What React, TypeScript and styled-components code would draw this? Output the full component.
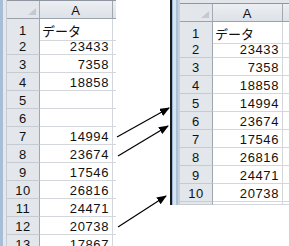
import { createGlobalStyle, styled } from "styled-components"

type SheetProps = {
    rows: (string | number)[],
    colA: number,
    spare: number,
    height: number,
    edge: "plain" | "window",
    tail?: number,
}

const leftRows = ['データ', 23433, 7358, 18858, '', '', 14994, 23674, 17546, 26816, 24471, 20738, 17867]
const rightRows = ['データ', 23433, 7358, 18858, 14994, 23674, 17546, 26816, 24471, 20738]

// arrows from the left list to the right list
const arrows = [
    { x1: 117, y1: 137, x2: 169, y2: 108 },
    { x1: 118, y1: 156, x2: 168, y2: 126 },
    { x1: 118, y1: 227, x2: 166, y2: 196 },
]

const Sheet = (props: SheetProps) => {
    const cols = `33px ${props.colA}px ${props.spare}px`
    return (
        <Frame $h={props.height}>
            <Edge $kind={props.edge} />
            <Grid $w={33 + props.colA + props.spare}>
                <TopBar />
                <Row $cols={cols} $h={18}>
                    <Corner><Triangle /></Corner>
                    <HeadCell>A</HeadCell>
                    <HeadSpare />
                </Row>
                {props.rows.map((v, i) => (
                    <Row key={i} $cols={cols} $h={18}>
                        <RowHead>{i + 1}</RowHead>
                        <Cell $text={typeof v === "string"}>{v}</Cell>
                        <Spare />
                    </Row>
                ))}
                {props.tail ? (
                    <Row $cols={cols} $h={props.tail}>
                        <RowHead />
                        <Cell $text={false} />
                        <Spare />
                    </Row>
                ) : null}
            </Grid>
        </Frame>
    )
}

export default function App() {
    return (<>
        <GlobalStyle />
        <Canvas>
            <Sheet rows={leftRows} colA={73} spare={3} height={246} edge="plain" />
            <Gap />
            <Sheet rows={rightRows} colA={70} spare={6} height={205} edge="window" tail={3} />
            <Arrows width="289" height="246">
                <defs>
                    <marker id="head" markerUnits="userSpaceOnUse" markerWidth="10" markerHeight="8"
                        refX="9" refY="4" orient="auto">
                        <path d="M0 0 L10 4 L0 8 Z" fill="#000" />
                    </marker>
                </defs>
                {arrows.map((a, i) => (
                    <line key={i} x1={a.x1} y1={a.y1} x2={a.x2} y2={a.y2}
                        stroke="#000" strokeWidth="1.2" markerEnd="url(#head)" />
                ))}
            </Arrows>
        </Canvas>
    </>)
}

const GlobalStyle = createGlobalStyle`
  body {
    margin: 0;
    background: #fff;
  }
`

const Canvas = styled.div`
    position: relative;
    width: 289px;
    height: 246px;
    overflow: hidden;
    display: flex;
    align-items: flex-start;
    background: #fff;
    font-family: "Liberation Sans", "Noto Sans CJK JP", sans-serif;
    font-size: 13px;
    letter-spacing: 0.6px;
    color: #111;
`

const Gap = styled.div`
    width: 54px;
    height: 10px;
    flex: none;
`

const Frame = styled.div<{ $h: number }>`
    display: flex;
    align-items: stretch;
    height: ${p => p.$h}px;
    overflow: hidden;
    flex: none;
`

const Edge = styled.div<{ $kind: "plain" | "window" }>`
    flex: none;
    width: ${p => p.$kind === "window" ? 10 : 7}px;
    background: ${p => p.$kind === "window"
        ? "linear-gradient(to right, #1b1b1b 0 2px, #9db6d4 2px 3px, #d6e3f2 3px 6px, #a9c0dc 6px 8px, #c9cfd6 8px 10px)"
        : "linear-gradient(to right, #a7bdd8 0 3px, #e4e8ee 3px 6px, #c6ccd3 6px 7px)"};
`

const Grid = styled.div<{ $w: number }>`
    display: flex;
    flex-direction: column;
    width: ${p => p.$w}px;
    flex: none;
`

const TopBar = styled.div`
    height: 3px;
    background: #e2e6eb;
    border-bottom: 1px solid #8f969f;
`

const Row = styled.div<{ $cols: string, $h: number }>`
    display: grid;
    grid-template-columns: ${p => p.$cols};
    height: ${p => p.$h}px;
    flex: none;
`

const Corner = styled.div`
    display: flex;
    justify-content: flex-end;
    align-items: flex-end;
    padding: 0 3px 3px 0;
    background: #e3e7ec;
    border-right: 1px solid #a4abb4;
    border-bottom: 1px solid #9aa2ac;
`

const Triangle = styled.div`
    width: 8px;
    height: 7px;
    background: #c3c9d1;
    clip-path: polygon(100% 0, 100% 100%, 0 100%);
`

const HeadCell = styled.div`
    display: flex;
    align-items: center;
    justify-content: center;
    padding-top: 1px;
    background: linear-gradient(#eceff3, #dde2e8);
    border-right: 1px solid #a0a7b0;
    border-bottom: 1px solid #9aa2ac;
`

const HeadSpare = styled.div`
    background: linear-gradient(#eceff3, #dde2e8);
    border-bottom: 1px solid #9aa2ac;
`

const RowHead = styled.div`
    display: flex;
    align-items: center;
    justify-content: center;
    padding-top: 2px;
    background: #e3e7ec;
    border-right: 1px solid #a0a7b0;
    border-bottom: 1px solid #c5cbd2;
`

const Cell = styled.div<{ $text: boolean }>`
    display: flex;
    align-items: center;
    justify-content: ${p => p.$text ? "flex-start" : "flex-end"};
    padding: 2px 3px 0 2px;
    white-space: nowrap;
    border-right: 1px solid #d3d7dc;
    border-bottom: 1px solid #d3d7dc;
    letter-spacing: ${p => p.$text ? "0" : "0.6px"};
`

const Spare = styled.div`
    border-bottom: 1px solid #d3d7dc;
`

const Arrows = styled.svg`
    position: absolute;
    top: 0;
    left: 0;
    pointer-events: none;
`
